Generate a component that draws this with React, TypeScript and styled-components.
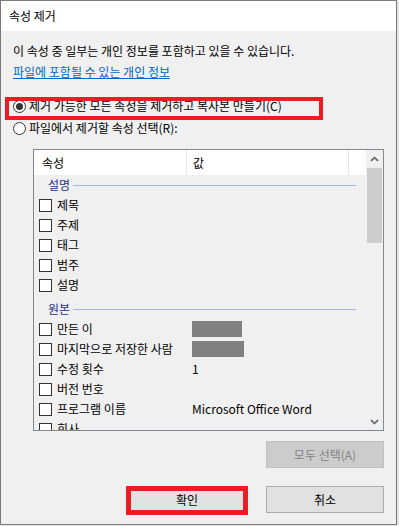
import React from "react";
import styled, { createGlobalStyle, css } from "styled-components";

const GlobalStyle = createGlobalStyle`
  html, body {
    margin: 0;
    padding: 0;
    background: #e4e4e4;
  }
  body {
    font-family: "Noto Sans CJK KR", "Noto Sans", sans-serif;
    font-size: 12px;
    color: #000;
  }
`;

const Window = styled.div`
  width: 397px;
  height: 525px;
  box-sizing: border-box;
  border: 1px solid #7a7a7a;
  background: #f0f0f0;
  display: flex;
  flex-direction: column;
`;

const TitleBar = styled.div`
  height: 30px;
  background: #fff;
  display: flex;
  align-items: center;
  padding-left: 8px;
  line-height: 16px;
`;

const Body = styled.div`
  display: flex;
  flex-direction: column;
  padding: 0 12px;
`;

const Info = styled.div`
  margin-top: 12px;
  line-height: 16px;
`;

const InfoLink = styled.a`
  margin-top: 5px;
  line-height: 16px;
  color: #0066cc;
  text-decoration: underline;
  align-self: flex-start;
`;

const RadioRow = styled.label<{ $first?: boolean }>`
  position: relative;
  height: 22px;
  display: flex;
  align-items: center;
  gap: 3px;
  margin-top: ${(p) => (p.$first ? "15px" : "0")};
  line-height: 16px;
`;

const RadioDot = styled.span<{ $checked?: boolean }>`
  width: 13px;
  height: 13px;
  box-sizing: border-box;
  border: 1px solid #333;
  border-radius: 50%;
  background: #fff;
  display: flex;
  align-items: center;
  justify-content: center;
  &::after {
    content: "";
    width: 7px;
    height: 7px;
    border-radius: 50%;
    background: ${(p) => (p.$checked ? "#333" : "transparent")};
  }
`;

const Highlight = styled.span`
  position: absolute;
  left: -8px;
  top: 2px;
  width: 318px;
  height: 23px;
  box-sizing: border-box;
  border: 4px solid #ed1c24;
  pointer-events: none;
`;

const ListBox = styled.div`
  margin: 10px 0 0 20px;
  width: 351px;
  height: 282px;
  box-sizing: border-box;
  border: 1px solid #828790;
  display: grid;
  grid-template-columns: 1fr 17px;
  overflow: hidden;
`;

const ListMain = styled.div`
  display: flex;
  flex-direction: column;
  overflow: hidden;
`;

const HeaderRow = styled.div`
  height: 25px;
  flex-shrink: 0;
  background: #fff;
  display: grid;
  grid-template-columns: 153px 162px 1fr;
`;

const HeaderCell = styled.div<{ $pad: number }>`
  display: flex;
  align-items: center;
  padding-left: ${(p) => p.$pad}px;
  border-right: 1px solid #e5e5e5;
  line-height: 16px;
  &:last-child {
    border-right: none;
  }
`;

const GroupHeader = styled.div<{ $first?: boolean }>`
  height: 20px;
  flex-shrink: 0;
  margin-top: ${(p) => (p.$first ? "0" : "4px")};
  display: flex;
  align-items: center;
  gap: 3px;
  padding: 0 10px 0 14px;
  color: #1e3287;
  line-height: 16px;
  &::after {
    content: "";
    flex: 1;
    height: 1px;
    background: #a2b5dc;
  }
`;

const ItemRow = styled.div`
  height: 20px;
  flex-shrink: 0;
  display: grid;
  grid-template-columns: 158px 1fr;
  align-items: center;
  line-height: 16px;
`;

const ItemName = styled.div`
  display: flex;
  align-items: center;
  gap: 5px;
  padding-left: 5px;
  white-space: nowrap;
`;

const CheckBox = styled.span`
  width: 13px;
  height: 13px;
  box-sizing: border-box;
  border: 1px solid #333;
  background: #fff;
  flex-shrink: 0;
`;

const Redacted = styled.span<{ $w: number }>`
  display: block;
  width: ${(p) => p.$w}px;
  height: 16px;
  background: #808080;
`;

const ScrollBar = styled.div`
  display: flex;
  flex-direction: column;
  background: #f0f0f0;
`;

const ScrollArrow = styled.div`
  height: 17px;
  display: flex;
  align-items: center;
  justify-content: center;
  color: #606060;
`;

const ScrollTrack = styled.div`
  flex: 1;
  padding: 1px 1px 0;
`;

const ScrollThumb = styled.div`
  height: 75px;
  background: #cdcdcd;
`;

const ButtonRow = styled.div<{ $top: number }>`
  display: flex;
  justify-content: flex-end;
  gap: 20px;
  margin-top: ${(p) => p.$top}px;
`;

const Button = styled.button<{ $disabled?: boolean }>`
  position: relative;
  width: 118px;
  height: 27px;
  box-sizing: border-box;
  border: 1px solid #adadad;
  background: #e1e1e1;
  font-family: inherit;
  font-size: 12px;
  line-height: 16px;
  color: #000;
  padding: 0;
  ${(p) =>
    p.$disabled &&
    css`
      background: #cccccc;
      border-color: #bfbfbf;
      color: #838383;
    `}
`;

const ButtonHighlight = styled.span`
  position: absolute;
  left: -3px;
  right: -3px;
  top: -1px;
  bottom: -3px;
  border: 5px solid #ed1c24;
  pointer-events: none;
`;

const Chevron = ({ down }: { down?: boolean }) => (
  <svg width="9" height="6" viewBox="0 0 9 6">
    <path
      d={down ? "M1 1.2 L4.5 4.5 L8 1.2" : "M1 4.8 L4.5 1.5 L8 4.8"}
      fill="none"
      stroke="currentColor"
      strokeWidth="1.6"
    />
  </svg>
);

type Item = { name: string; value?: React.ReactNode };

const groups: { title: string; items: Item[] }[] = [
  {
    title: "설명",
    items: [{ name: "제목" }, { name: "주제" }, { name: "태그" }, { name: "범주" }, { name: "설명" }],
  },
  {
    title: "원본",
    items: [
      { name: "만든 이", value: <Redacted $w={50} /> },
      { name: "마지막으로 저장한 사람", value: <Redacted $w={52} /> },
      { name: "수정 횟수", value: "1" },
      { name: "버전 번호" },
      { name: "프로그램 이름", value: "Microsoft Office Word" },
      { name: "회사" },
    ],
  },
];

export default function App() {
  return (
    <>
      <GlobalStyle />
      <Window>
        <TitleBar>속성 제거</TitleBar>
        <Body>
          <Info>이 속성 중 일부는 개인 정보를 포함하고 있을 수 있습니다.</Info>
          <InfoLink>파일에 포함될 수 있는 개인 정보</InfoLink>
          <RadioRow $first>
            <RadioDot $checked />
            제거 가능한 모든 속성을 제거하고 복사본 만들기(C)
            <Highlight />
          </RadioRow>
          <RadioRow>
            <RadioDot />
            파일에서 제거할 속성 선택(R):
          </RadioRow>
          <ListBox>
            <ListMain>
              <HeaderRow>
                <HeaderCell $pad={8}>속성</HeaderCell>
                <HeaderCell $pad={6}>값</HeaderCell>
                <HeaderCell $pad={0} />
              </HeaderRow>
              {groups.map((g, gi) => (
                <React.Fragment key={g.title}>
                  <GroupHeader $first={gi === 0}>{g.title}</GroupHeader>
                  {g.items.map((it) => (
                    <ItemRow key={it.name}>
                      <ItemName>
                        <CheckBox />
                        {it.name}
                      </ItemName>
                      <div>{it.value}</div>
                    </ItemRow>
                  ))}
                </React.Fragment>
              ))}
            </ListMain>
            <ScrollBar>
              <ScrollArrow>
                <Chevron />
              </ScrollArrow>
              <ScrollTrack>
                <ScrollThumb />
              </ScrollTrack>
              <ScrollArrow>
                <Chevron down />
              </ScrollArrow>
            </ScrollBar>
          </ListBox>
          <ButtonRow $top={10}>
            <Button $disabled>모두 선택(A)</Button>
          </ButtonRow>
          <ButtonRow $top={18}>
            <Button>
              확인
              <ButtonHighlight />
            </Button>
            <Button>취소</Button>
          </ButtonRow>
        </Body>
      </Window>
    </>
  );
}
